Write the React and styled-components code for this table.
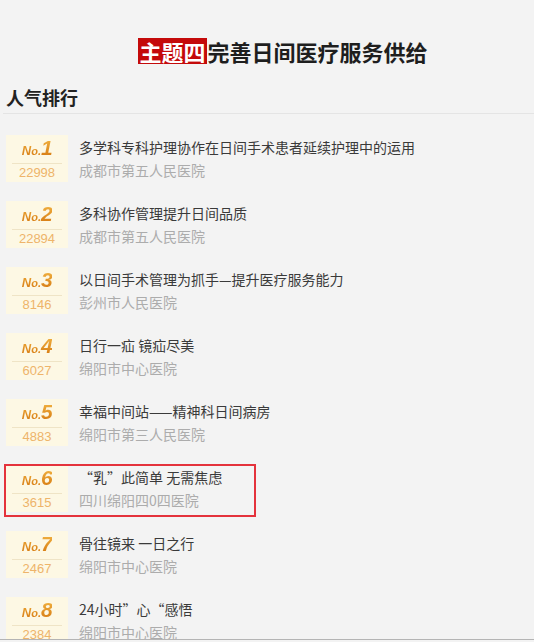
import React from 'react';
import styled, { createGlobalStyle } from 'styled-components';

const GlobalStyle = createGlobalStyle`
  body {
    margin: 0;
    background: #f3f3f3;
    font-family: "Noto Sans CJK SC", "Liberation Sans", sans-serif;
  }
`;

const Page = styled.div`
  height: 639px;
  overflow: hidden;
  border-bottom: 1px solid #b4b4b4;
`;

const Header = styled.h1`
  display: flex;
  justify-content: center;
  align-items: center;
  margin: 0;
  padding: 38px 0 0 32px;
  height: 26px;
  font-size: 22px;
  line-height: 26px;
  font-weight: 700;
  color: #1e1e1e;
`;

const Tag = styled.span`
  display: inline-block;
  height: 26px;
  line-height: 26px;
  padding: 0 1px;
  background: #c40a0a;
  color: #fff;
  margin-right: 1px;
`;

const Section = styled.h2`
  margin: 21px 0 0 3px;
  padding: 0 0 4px 3px;
  font-size: 18px;
  line-height: 24px;
  font-weight: 700;
  color: #222;
  border-bottom: 1px solid #e4e4e4;
`;

const List = styled.ul`
  list-style: none;
  margin: 21px 0 0;
  padding: 0 0 0 6px;
  display: flex;
  flex-direction: column;
  gap: 19px;
`;

const Row = styled.li`
  position: relative;
  display: flex;
  height: 47px;

  ${p => p.$marked && `
    &::after {
      content: "";
      position: absolute;
      left: -2px;
      top: -1px;
      width: 252px;
      height: 53px;
      box-sizing: border-box;
      border: 2px solid #e4323c;
      pointer-events: none;
    }
  `}
`;

const Badge = styled.div`
  width: 62px;
  flex: none;
  box-sizing: border-box;
  padding: 3px 6px 0;
  background: #fdf8e4;
  display: flex;
  flex-direction: column;
  align-items: center;
`;

const Rank = styled.div`
  height: 20px;
  line-height: 20px;
  font-family: "Liberation Sans", Arial, sans-serif;
  font-style: italic;
  font-weight: 700;
  background: linear-gradient(#f2b443, #d5780f);
  -webkit-background-clip: text;
  background-clip: text;
  color: transparent;
  white-space: nowrap;
`;

const RankNo = styled.span`
  font-size: 13px;
`;

const RankSmall = styled.span`
  font-size: 11px;
`;

const RankNum = styled.span`
  font-size: 21px;
  letter-spacing: -0.5px;
`;

const Divider = styled.div`
  align-self: stretch;
  height: 1px;
  margin-top: 5px;
  background: #efe4c6;
`;

const Count = styled.div`
  margin-top: 1px;
  line-height: 16px;
  font-family: "Liberation Sans", Arial, sans-serif;
  font-size: 13px;
  color: #eeb46a;
`;

const Info = styled.div`
  margin-left: 11px;
  padding-top: 2px;
  display: flex;
  flex-direction: column;
  gap: 3px;
`;

const Title = styled.div`
  font-size: 14px;
  line-height: 20px;
  color: #3a3a3a;
  white-space: nowrap;
`;

const Hospital = styled.div`
  font-size: 14px;
  line-height: 20px;
  color: #acacac;
  white-space: nowrap;
`;

const items = [
  { title: '多学科专科护理协作在日间手术患者延续护理中的运用', hospital: '成都市第五人民医院', count: 22998 },
  { title: '多科协作管理提升日间品质', hospital: '成都市第五人民医院', count: 22894 },
  { title: '以日间手术管理为抓手—提升医疗服务能力', hospital: '彭州市人民医院', count: 8146 },
  { title: '日行一疝 镜疝尽美', hospital: '绵阳市中心医院', count: 6027 },
  { title: '幸福中间站——精神科日间病房', hospital: '绵阳市第三人民医院', count: 4883 },
  { title: '“乳”此简单 无需焦虑', hospital: '四川绵阳四0四医院', count: 3615, marked: true },
  { title: '骨往镜来 一日之行', hospital: '绵阳市中心医院', count: 2467 },
  { title: '24小时”心“感悟', hospital: '绵阳市中心医院', count: 2384 },
];

export default function App() {
  return (
    <Page>
      <GlobalStyle />
      <Header>
        <Tag>主题四</Tag>完善日间医疗服务供给
      </Header>
      <Section>人气排行</Section>
      <List>
        {items.map((it, i) => (
          <Row key={i} $marked={it.marked}>
            <Badge>
              <Rank>
                <RankNo>N</RankNo><RankSmall>o.</RankSmall><RankNum>{i + 1}</RankNum>
              </Rank>
              <Divider />
              <Count>{it.count}</Count>
            </Badge>
            <Info>
              <Title>{it.title}</Title>
              <Hospital>{it.hospital}</Hospital>
            </Info>
          </Row>
        ))}
      </List>
    </Page>
  );
}
